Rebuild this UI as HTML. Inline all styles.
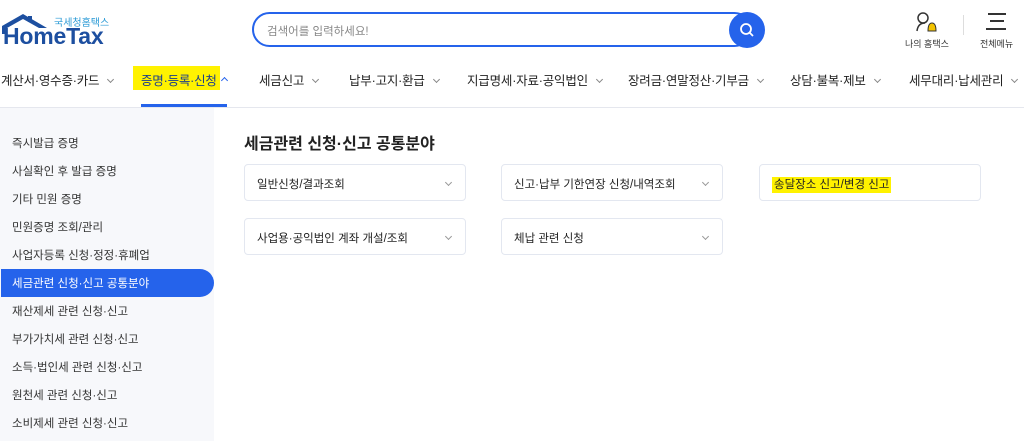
<!DOCTYPE html>
<html><head><meta charset="utf-8"><style>
*{margin:0;padding:0;box-sizing:border-box}
body{width:1024px;height:441px;overflow:hidden;background:#fff;font-family:"Liberation Sans","Noto Sans CJK KR",sans-serif;color:#222;position:relative}
.abs{position:absolute}
.nav{font-size:12.5px;color:#222;top:70px;white-space:nowrap;letter-spacing:-0.2px}
.chev{display:inline-block;width:5px;height:5px;border-right:1.2px solid #888;border-bottom:1.2px solid #888;transform:rotate(45deg);margin-left:9px;position:relative;top:-3px}
.side{left:0;top:108px;width:214px;height:333px;background:#f7f8fb}
.si{position:absolute;left:12px;font-size:11.5px;color:#333}
.box{position:absolute;width:222px;height:37px;border:1px solid #e3e7f0;border-radius:4px;background:#fff;font-size:11.5px;padding:11px 0 0 12px;color:#222}
.box .c{position:absolute;right:14px;top:15px;width:5px;height:5px;border-right:1px solid #999;border-bottom:1px solid #999;transform:rotate(45deg)}
.hl{background:#fff200}
</style></head><body>
<!-- logo -->
<svg class="abs" style="left:1px;top:12px" width="52" height="24" viewBox="0 0 52 24"><path d="M1 22 L1 14 L22 2 L46 16 L38 16 L22 7 L6 16 L6 22 Z" fill="#1d4fa0"/><rect x="27" y="4" width="4" height="6" fill="#1d4fa0"/></svg>
<div class="abs" style="left:54px;top:14px;font-size:10px;color:#2a9ad6">국세청홈택스</div>
<div class="abs" style="left:3px;top:25px;font-size:23px;font-weight:bold;color:#1d4fa0;letter-spacing:-0.2px;line-height:23px">HomeTax</div>
<!-- search -->
<div class="abs" style="left:252px;top:12px;width:500px;height:35px;border:2px solid #2563eb;border-radius:18px"></div>
<div class="abs" style="left:267px;top:23px;font-size:11.5px;color:#888">검색어를 입력하세요!</div>
<div class="abs" style="left:729px;top:12px;width:36px;height:36px;border-radius:50%;background:#2563eb"></div>
<svg class="abs" style="left:737px;top:20px" width="20" height="20" viewBox="0 0 20 20"><circle cx="9" cy="9" r="5" stroke="#fff" stroke-width="1.8" fill="none"/><path d="M12.5 12.5 L16 16" stroke="#fff" stroke-width="1.8"/></svg>
<!-- right icons -->
<svg class="abs" style="left:915px;top:11px" width="26" height="22" viewBox="0 0 26 22"><circle cx="8" cy="7" r="5" stroke="#333" stroke-width="1.5" fill="none"/><path d="M2 20 Q3 12 10 12" stroke="#333" stroke-width="1.5" fill="none"/><path d="M13 20 Q13 12 17 12 Q21 12 21 20 Z" fill="#f3c300" stroke="#333" stroke-width="1"/></svg>
<div class="abs" style="left:905px;top:37px;font-size:9px;color:#333">나의 홈택스</div>
<div class="abs" style="left:963px;top:15px;width:1px;height:20px;background:#ddd"></div>
<div class="abs" style="left:988px;top:13px;width:18px;height:1.5px;background:#333"></div>
<div class="abs" style="left:990px;top:20px;width:14px;height:1.5px;background:#333"></div>
<div class="abs" style="left:986px;top:28px;width:20px;height:1.5px;background:#333"></div>
<div class="abs" style="left:980px;top:37px;font-size:9px;color:#333">전체메뉴</div>
<!-- nav -->
<div class="abs nav" style="left:1px">계산서·영수증·카드<span class="chev"></span></div>
<div class="abs" style="left:133px;top:66px;background:#fff200;width:87px;height:24px"></div>
<div class="abs nav" style="left:141px;color:#1d3f8a">증명·등록·신청</div>
<div class="abs" style="left:222px;top:78px;width:5px;height:5px;border-left:1.5px solid #2563eb;border-top:1.5px solid #2563eb;transform:rotate(45deg)"></div>
<div class="abs nav" style="left:259px">세금신고<span class="chev"></span></div>
<div class="abs nav" style="left:349px">납부·고지·환급<span class="chev"></span></div>
<div class="abs nav" style="left:467px">지급명세·자료·공익법인<span class="chev"></span></div>
<div class="abs nav" style="left:628px">장려금·연말정산·기부금<span class="chev"></span></div>
<div class="abs nav" style="left:790px">상담·불복·제보<span class="chev"></span></div>
<div class="abs nav" style="left:909px">세무대리·납세관리<span class="chev"></span></div>
<div class="abs" style="left:0;top:107px;width:1024px;height:1px;background:#e5e7ee"></div>
<div class="abs" style="left:141px;top:104px;width:86px;height:3px;background:#2563eb"></div>
<!-- sidebar -->
<div class="abs side">
<div class="si" style="top:27px">즉시발급 증명</div>
<div class="si" style="top:55px">사실확인 후 발급 증명</div>
<div class="si" style="top:83px">기타 민원 증명</div>
<div class="si" style="top:111px">민원증명 조회/관리</div>
<div class="si" style="top:139px">사업자등록 신청·정정·휴폐업</div>
<div style="position:absolute;left:1px;top:161px;width:213px;height:28px;background:#2563eb;border-radius:0 14px 14px 0"></div>
<div class="si" style="top:167px;color:#fff">세금관련 신청·신고 공통분야</div>
<div class="si" style="top:195px">재산제세 관련 신청·신고</div>
<div class="si" style="top:223px">부가가치세 관련 신청·신고</div>
<div class="si" style="top:251px">소득·법인세 관련 신청·신고</div>
<div class="si" style="top:279px">원천세 관련 신청·신고</div>
<div class="si" style="top:307px">소비제세 관련 신청·신고</div>
</div>
<!-- content -->
<div class="abs" style="left:244px;top:130px;font-size:16px;font-weight:bold;color:#222">세금관련 신청·신고 공통분야</div>
<div class="box" style="left:244px;top:164px">일반신청/결과조회<span class="c"></span></div>
<div class="box" style="left:501px;top:164px">신고·납부 기한연장 신청/내역조회<span class="c"></span></div>
<div class="box" style="left:759px;top:164px"><span class="hl" style="padding:2px 2px">송달장소 신고/변경 신고</span></div>
<div class="box" style="left:244px;top:218px">사업용·공익법인 계좌 개설/조회<span class="c"></span></div>
<div class="box" style="left:501px;top:218px">체납 관련 신청<span class="c"></span></div>
</body></html>
